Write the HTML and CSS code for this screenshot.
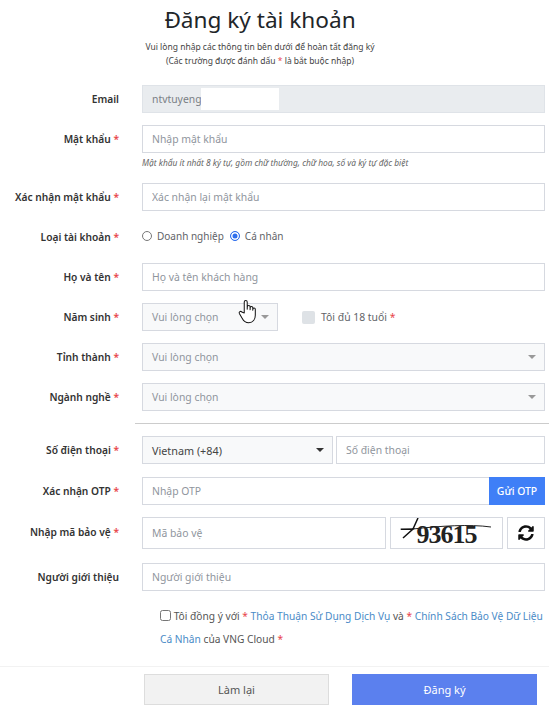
FILE: index.html
```html
<!DOCTYPE html>
<html lang="vi">
<head>
<meta charset="utf-8">
<title>Đăng ký tài khoản</title>
<link rel="stylesheet" href="styles.css">
</head>
<body>
<form class="page">
  <header class="head">
    <h1 class="title">Đăng ký tài khoản</h1>
    <p class="sub">Vui lòng nhập các thông tin bên dưới để hoàn tất đăng ký</p>
    <p class="sub">(Các trường được đánh dấu <span class="req">*</span> là bắt buộc nhập)</p>
  </header>

  <div class="row">
    <label class="lbl">Email</label>
    <div class="ctl email-wrap">
      <input class="inp inp-off" value="ntvtuyeng" readonly>
      <span class="mask"></span>
    </div>
  </div>

  <div class="row row-hint">
    <label class="lbl">Mật khẩu <span class="req">*</span></label>
    <div class="ctl ctl-col">
      <input class="inp" placeholder="Nhập mật khẩu">
      <small class="hint">Mật khẩu ít nhất 8 ký tự, gồm chữ thường, chữ hoa, số và ký tự đặc biệt</small>
    </div>
  </div>

  <div class="row">
    <label class="lbl">Xác nhận mật khẩu <span class="req">*</span></label>
    <div class="ctl"><input class="inp" placeholder="Xác nhận lại mật khẩu"></div>
  </div>

  <div class="row">
    <label class="lbl">Loại tài khoản <span class="req">*</span></label>
    <div class="ctl radios">
      <span class="radio"></span><span class="opt">Doanh nghiệp</span>
      <span class="radio radio-on"></span><span class="opt">Cá nhân</span>
    </div>
  </div>

  <div class="row">
    <label class="lbl">Họ và tên <span class="req">*</span></label>
    <div class="ctl"><input class="inp" placeholder="Họ và tên khách hàng"></div>
  </div>

  <div class="row">
    <label class="lbl">Năm sinh <span class="req">*</span></label>
    <div class="ctl year-line">
      <div class="sel sel-year"><span>Vui lòng chọn</span><i class="caret"></i></div>
      <span class="box"></span>
      <span class="opt opt-age">Tôi đủ 18 tuổi <span class="req">*</span></span>
      <svg class="hand" viewBox="0 0 20 28" width="19" height="26" aria-hidden="true">
        <path d="M6.5 15V3.2a1.6 1.6 0 0 1 3.2 0V11l.1-2.6a1.5 1.5 0 0 1 3 0V11.500l.1-2a1.400 1.400 0 0 1 2.800 0v2.500l.1-1a1.300 1.300 0 0 1 2.600 0v6.500c0 4.500-2.500 8-7 8-3.500 0-5.500-1.500-7-4.500L1.200 15.500c-.8-1.600 1.400-3 2.600-1.500z" fill="#fff" stroke="#111" stroke-width="1.100" stroke-linejoin="round"/>
      </svg>
    </div>
  </div>

  <div class="row">
    <label class="lbl">Tỉnh thành <span class="req">*</span></label>
    <div class="ctl"><div class="sel"><span>Vui lòng chọn</span><i class="caret"></i></div></div>
  </div>

  <div class="row">
    <label class="lbl">Ngành nghề <span class="req">*</span></label>
    <div class="ctl"><div class="sel"><span>Vui lòng chọn</span><i class="caret"></i></div></div>
  </div>

  <hr class="rule">

  <div class="row row-phone">
    <label class="lbl">Số điện thoại <span class="req">*</span></label>
    <div class="ctl phone">
      <div class="sel sel-phone"><span>Vietnam (+84)</span><i class="caret caret-dark"></i></div>
      <input class="inp" placeholder="Số điện thoại">
    </div>
  </div>

  <div class="row">
    <label class="lbl">Xác nhận OTP <span class="req">*</span></label>
    <div class="ctl otp">
      <input class="inp" placeholder="Nhập OTP">
      <button class="otp-btn" type="button">Gửi OTP</button>
    </div>
  </div>

  <div class="row row-captcha">
    <label class="lbl lbl-captcha">Nhập mã bảo vệ <span class="req">*</span></label>
    <div class="ctl captcha">
      <input class="inp" placeholder="Mã bảo vệ">
      <div class="cap-img">
        <span class="cap-txt">93615</span>
        <svg class="cap-line" viewBox="0 0 113 31" width="113" height="31" aria-hidden="true">
          <path d="M23 12 C50 9 80 7 101 10" fill="none" stroke="#222" stroke-width="1"/>
          <path d="M10.700 12.300 L23 12 L13 21 M23 12 L28 1" fill="none" stroke="#111" stroke-width="1.500"/>
        </svg>
      </div>
      <button class="refresh" type="button" aria-label="refresh">
        <svg viewBox="0 0 512 512" width="16" height="16" aria-hidden="true">
          <path fill="#111" d="M370.700 133.300C339.500 104 298.900 88 255.800 88c-77.500.1-144.300 53.200-162.800 126.900-1.300 5.400-6.100 9.100-11.600 9.100H24.100c-7.500 0-13.200-6.800-11.800-14.200C33.900 94.900 134.800 8 256 8c66.400 0 126.800 26.100 171.300 68.700L463 41c15.100-15.100 41-4.400 41 17v134c0 13.300-10.700 24-24 24H346c-21.400 0-32.100-25.900-17-41l41.700-41.700zM32 296h134c21.400 0 32.100 25.900 17 41l-41.700 41.700c31.200 29.300 71.800 45.300 114.900 45.300 77.400-.1 144.300-53.100 162.800-126.800 1.300-5.400 6.100-9.100 11.600-9.100h57.300c7.500 0 13.200 6.800 11.800 14.200C478.100 417.100 377.200 504 256 504c-66.400 0-126.800-26.100-171.300-68.700L49 471c-15.100 15.100-41 4.400-41-17V320c0-13.300 10.700-24 24-24z"/>
        </svg>
      </button>
    </div>
  </div>

  <div class="row">
    <label class="lbl">Người giới thiệu</label>
    <div class="ctl"><input class="inp" placeholder="Người giới thiệu"></div>
  </div>

  <div class="agree">
    <input class="agree-box" type="checkbox">
    Tôi đồng ý với <span class="req">*</span> <a class="link">Thỏa Thuận Sử Dụng Dịch Vụ</a> và <span class="req">*</span> <a class="link">Chính Sách Bảo Vệ Dữ Liệu</a><br>
    <a class="link">Cá Nhân</a> của VNG Cloud <span class="req">*</span>
  </div>

  <footer class="foot">
    <button class="btn btn-reset" type="button">Làm lại</button>
    <button class="btn btn-submit" type="button">Đăng ký</button>
  </footer>
</form>
</body>
</html>
```
FILE: styles.css
```css
* { box-sizing: border-box; }
html, body { margin: 0; padding: 0; background: #fff; }
body {
  font-family: "Noto Sans", "Open Sans", sans-serif;
  font-size: 10.4px;
  color: #333;
  overflow: hidden;
  height: 707px;
}
.page { display: flex; flex-direction: column; width: 545px; }
.head { text-align: center; padding: 2px 25px 0 0; height: 85px; }
.title { margin: 0 0 2px; font-size: 22.6px; line-height: 36px; font-weight: 400; color: #212529; }
.sub { margin: 0; font-size: 8.5px; line-height: 14px; color: #444; }
.req { color: #e8444a; }
.row {
  display: grid;
  grid-template-columns: 119px 1fr;
  column-gap: 23px;
  min-height: 28px;
  margin-bottom: 12px;
  align-items: center;
}
.row-hint { align-items: start; }
.row-hint .lbl { line-height: 28px; }
.row-phone { margin-bottom: 13px; }
.row-captcha { margin-bottom: 13px; }
.lbl-captcha { margin-top: -4px; }
.lbl { text-align: right; font-weight: 600; font-size: 10.2px; color: #333; white-space: nowrap; }
.ctl { display: flex; min-width: 0; }
.ctl-col { flex-direction: column; }
.email-wrap { position: relative; }
.mask { position: absolute; left: 59px; top: 3px; width: 78px; height: 22px; background: #fff; }
.inp {
  flex: 1 1 auto;
  width: 100%;
  min-width: 0;
  height: 28px;
  padding: 0 9px;
  border: 1px solid #d6d9e0;
  background: #fff;
  font: 10.4px "Noto Sans", sans-serif;
  color: #555;
  outline: none;
}
.ctl-col .inp { flex: 0 0 28px; }
.inp::placeholder { color: #8f959d; opacity: 1; }
.inp-off { background: #e9ecef; border-color: #dfe3e8; color: #7a7f85; }
.hint { font-size: 8.4px; font-style: italic; line-height: 20px; height: 18px; color: #666; }
.radios { align-items: center; height: 28px; font-size: 10px; padding-bottom: 2px; }
.radio { width: 10px; height: 10px; border: 1px solid #777; border-radius: 50%; background: #fff; margin-right: 5px; }
.radio-on { border-color: #2f6fed; box-shadow: inset 0 0 0 1.500px #fff; background: #2f6fed; }
.opt { color: #5f6368; margin-right: 6px; }
.opt-age { font-size: 10.4px; }
.year-line { align-items: center; position: relative; }
.hand { position: absolute; left: 96px; top: -4px; }
.sel {
  flex: 1;
  display: flex;
  align-items: center;
  justify-content: space-between;
  height: 28px;
  padding: 0 8px 0 9px;
  border: 1px solid #d6d9e0;
  background: #f8f9fa;
  color: #8f959d;
}
.sel-year { flex: 0 0 136px; margin-right: 24px; }
.caret { width: 0; height: 0; border: 4px solid transparent; border-top-color: #999; border-bottom: 0; }
.caret-dark { border-top-color: #333; }
.box { width: 13px; height: 13px; border-radius: 2px; background: #dee2e6; margin-right: 6px; }
.rule { margin: 0 -4px 12px 135px; border: 0; border-top: 1px solid #ccc; height: 0; }
.phone { gap: 3px; }
.sel-phone { flex: 0 0 191px; color: #444; font-size: 10.8px; }
.otp .inp { border-right: 0; }
.otp-btn {
  flex: 0 0 56px;
  border: 0;
  height: 28px;
  padding: 0;
  background: #3f7ff7;
  color: #fff;
  font: 500 10.4px "Noto Sans", sans-serif;
}
.captcha { gap: 4px; height: 33px; }
.captcha .inp { flex: 0 0 244px; height: 32px; }
.cap-img {
  position: relative;
  flex: 0 0 113px;
  height: 32px;
  border: 1px solid #d6d9e0;
  display: flex;
  align-items: center;
  justify-content: center;
  overflow: hidden;
}
.cap-txt { font: 700 26px/1 "Liberation Serif", serif; color: #222; letter-spacing: -1px; padding-top: 4px; }
.cap-line { position: absolute; left: -1px; top: -1px; }
.refresh {
  flex: 1;
  height: 32px;
  border: 1px solid #d6d9e0;
  background: #fff;
  padding: 0;
  display: flex;
  align-items: center;
  justify-content: center;
}
.agree {
  margin: 2px 0 0 160px;
  height: 61px;
  font-size: 10.2px;
  line-height: 23px;
  color: #555;
  white-space: nowrap;
}
.agree-box { width: 11px; height: 11px; margin: 0; vertical-align: -1px; }
.link { color: #4a8bc7; }
.foot {
  display: flex;
  gap: 23px;
  justify-content: flex-end;
  margin-right: -4px;
  padding: 7px 12px 0 0;
  border-top: 1px solid #f2f2f2;
}
.btn { width: 185px; height: 31px; font: 400 11px "Noto Sans", sans-serif; padding: 0; }
.btn-reset { background: #f2f2f2; border: 1px solid #ddd; color: #555; }
.btn-submit { background: #5b80ee; border: 1px solid #5b80ee; color: #fff; }
```
